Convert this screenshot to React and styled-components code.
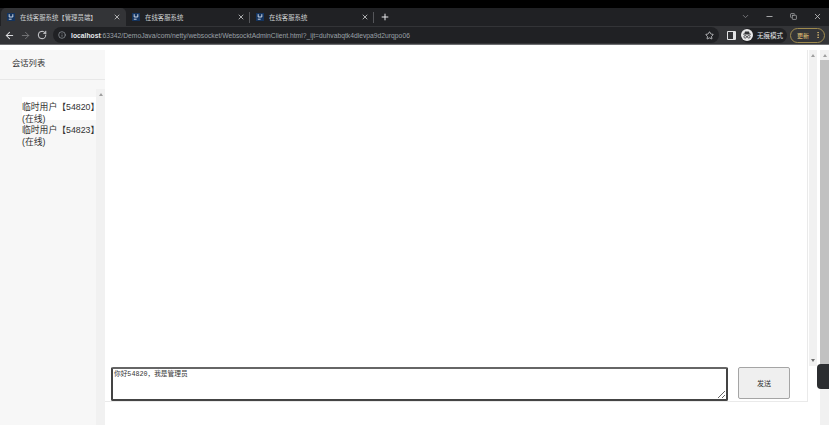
import React from 'react'
import styled, { createGlobalStyle } from 'styled-components'
import { ArrowLeft, ArrowRight, RotateCw, Info, Star, X, Plus, ChevronDown, Minus, Copy, EllipsisVertical } from 'lucide-react'

const Global = createGlobalStyle`
  html, body { margin: 0; padding: 0; height: 100%; overflow: hidden; background: #fff; }
  body { font-family: "Liberation Sans", "Noto Sans CJK SC", sans-serif; }
`

const Page = styled.div`
  width: 829px;
  height: 425px;
  display: flex;
  flex-direction: column;
  overflow: hidden;
`

const TopBlack = styled.div`
  height: 8px;
  background: #000;
`

const TabStrip = styled.div`
  height: 18px;
  background: #202124;
  display: flex;
  align-items: stretch;
  padding-left: 1px;
`

const Tab = styled.div`
  width: ${(p) => p.$w}px;
  padding: 0 ${(p) => (p.$active ? 5 : 4)}px 0 6px;
  box-sizing: border-box;
  display: flex;
  align-items: center;
  gap: 5px;
  background: ${(p) => (p.$active ? '#333437' : 'transparent')};
  border-radius: 5px 5px 0 0;
  color: #cfd0d2;
  font-size: 6.4px;
`

const TabTitle = styled.span`
  flex: 1;
  white-space: nowrap;
`

const TabSep = styled.span`
  width: 1px;
  height: 11px;
  align-self: center;
  background: #55565a;
`

const NewTab = styled.span`
  width: 22px;
  display: flex;
  align-items: center;
  justify-content: center;
  color: #e8e9eb;
`

const WinControls = styled.div`
  margin-left: auto;
  display: flex;
  align-items: center;
  padding-bottom: 2px;
  color: #cfd0d2;
`

const WinButton = styled.span`
  width: 24px;
  display: flex;
  justify-content: center;
`

const Toolbar = styled.div`
  height: 19px;
  box-sizing: border-box;
  background: #333437;
  border-bottom: 1px solid #6c6d70;
  display: flex;
  align-items: center;
  padding-left: 1px;
  color: #d6d7d9;
`

const NavButton = styled.span`
  display: flex;
  width: 16.5px;
  justify-content: center;
  color: ${(p) => (p.$dim ? '#77787b' : '#dcdde0')};
`

const Omnibox = styled.div`
  margin-left: 2.5px;
  width: 666px;
  height: 16px;
  border-radius: 8px;
  background: #202124;
  display: flex;
  align-items: center;
  padding: 0 5px;
  box-sizing: border-box;
  gap: 5px;
  font-size: 6.75px;
  color: #9aa0a6;
  white-space: nowrap;
`

const Url = styled.span`
  flex: 1;
  b { color: #e8eaed; font-weight: 700; }
`

const SidePanelIcon = styled.span`
  margin-left: 7.5px;
  width: 9px;
  height: 9px;
  box-sizing: border-box;
  border: 1px solid #e3e4e6;
  border-right-width: 3px;
  border-radius: 1px;
`

const IncognitoPill = styled.div`
  margin-left: 5.5px;
  height: 15px;
  border-radius: 8px;
  background: #202124;
  display: flex;
  align-items: center;
  gap: 4px;
  padding-right: 4px;
  font-size: 6.5px;
  color: #e3e4e6;
  white-space: nowrap;
`

const UpdateChip = styled.div`
  margin-left: 3px;
  height: 15px;
  width: 35px;
  border: 1px solid #a08b4e;
  border-radius: 8px;
  display: flex;
  align-items: center;
  justify-content: space-between;
  padding: 0 2px 0 6px;
  box-sizing: border-box;
  font-size: 6px;
  color: #e8c779;
  white-space: nowrap;
`

const Viewport = styled.div`
  flex: 1;
  min-height: 0;
  position: relative;
  display: flex;
  padding-top: 5px;
  background: #fff;
`

const Sidebar = styled.aside`
  width: 105px;
  background: #f7f7f7;
  display: flex;
  flex-direction: column;
  flex: none;
`

const SidebarHead = styled.div`
  height: 30px;
  box-sizing: border-box;
  border-bottom: 1px solid #e8e8e8;
  padding: 8px 0 0 12px;
  font-size: 8.3px;
  line-height: 11px;
  color: #333;
`

const SideBody = styled.div`
  flex: 1;
  display: flex;
  padding-top: 9px;
`

const ListWrap = styled.div`
  width: 96px;
  padding: 8px 0 0 22px;
  box-sizing: border-box;
`

const SessionItem = styled.div`
  height: 23.4px;
  padding-top: 5px;
  box-sizing: border-box;
  background: ${(p) => (p.$active ? '#fff' : 'transparent')};
  font-size: 8.8px;
  line-height: 11.5px;
  color: #333;
  white-space: nowrap;
`

const ItemLine = styled.div`
  height: 11.5px;
`

const MiniScroll = styled.div`
  width: ${(p) => p.$w || 8}px;
  background: #f1f1f1;
  display: flex;
  flex-direction: column;
  align-items: center;
`

const Arrow = styled.span`
  margin-top: 4px;
  width: 0;
  height: 0;
  border-left: 2.5px solid transparent;
  border-right: 2.5px solid transparent;
  border-bottom: 3px solid #9f9f9f;
`

const ArrowDown = styled(Arrow)`
  margin-top: auto;
  margin-bottom: 4px;
  border-bottom: 0;
  border-top: 3px solid #6f6f6f;
`

const Thumb = styled.div`
  width: 100%;
  margin-top: 3px;
  height: 308px;
  background: #c1c1c1;
`

const Main = styled.main`
  width: 703px;
  height: 352px;
  box-sizing: border-box;
  border-right: 1px solid #eaeaea;
  border-bottom: 1px solid #eaeaea;
  flex: none;
  display: flex;
  flex-direction: column;
  justify-content: flex-end;
  padding-left: 6px;
`

const Composer = styled.div`
  display: flex;
  align-items: flex-start;
  gap: 10px;
`

const Input = styled.textarea`
  width: 617px;
  height: 34px;
  box-sizing: border-box;
  border: 2px solid #444;
  border-top-color: #666;
  border-radius: 2px;
  padding: 1px;
  margin: 0;
  font-family: "Liberation Mono", "Noto Sans CJK SC", monospace;
  font-size: 6.7px;
  line-height: 8px;
  color: #333;
  outline: none;
`

const SendButton = styled.button`
  width: 52px;
  height: 32px;
  box-sizing: border-box;
  border: 1px solid #a5a5a5;
  border-radius: 2px;
  background: #efefef;
  color: #333;
  font-family: inherit;
  font-size: 7px;
  padding: 0;
`

const InnerScroll = styled(MiniScroll)`
  margin-left: 1px;
  height: 316px;
`

const PageScroll = styled(MiniScroll)`
  margin-left: 3px;
  width: 9px;
`

const SideHandle = styled.div`
  position: absolute;
  right: 0;
  top: 319px;
  width: 12px;
  height: 25px;
  background: #2b2d30;
  border-radius: 4px 0 0 4px;
`

function Favicon() {
  return (
    <svg width="8" height="8" viewBox="0 0 8 8" style={{ flex: 'none' }}>
      <rect width="8" height="8" fill="#14345f" />
      <path d="M2.2 1.2v2.8h3.6V1.2" fill="none" stroke="#dfe6f2" strokeWidth=".9" />
      <path d="M1.8 6.2h2.8" stroke="#dfe6f2" strokeWidth=".9" />
    </svg>
  )
}

function IncognitoAvatar() {
  return (
    <svg width="12" height="12" viewBox="0 0 12 12">
      <circle cx="6" cy="6" r="6" fill="#e9e9ea" />
      <path d="M4 2.6h4l.7 2.2H10v.7H2v-.7h1.3z" fill="#333437" />
      <circle cx="4.2" cy="7.8" r="1.3" fill="none" stroke="#333437" strokeWidth=".8" />
      <circle cx="7.8" cy="7.8" r="1.3" fill="none" stroke="#333437" strokeWidth=".8" />
      <path d="M5.5 7.6h1" stroke="#333437" strokeWidth=".7" />
    </svg>
  )
}

export default function App() {
  const tabs = [
    { title: '在线客服系统【管理员端】', w: 125, active: true },
    { title: '在线客服系统', w: 123 },
    { title: '在线客服系统', w: 123 },
  ]
  return (
    <Page>
      <Global />
      <TopBlack />
      <TabStrip>
        {tabs.map((t, i) => (
          <React.Fragment key={i}>
            <Tab $w={t.w} $active={t.active}>
              <Favicon />
              <TabTitle>{t.title}</TabTitle>
              <X size={8} strokeWidth={2.4} />
            </Tab>
            {i > 0 && <TabSep />}
          </React.Fragment>
        ))}
        <NewTab><Plus size={10} strokeWidth={2.4} /></NewTab>
        <WinControls>
          <WinButton><ChevronDown size={9} color="#8d8e91" /></WinButton>
          <WinButton><Minus size={9} /></WinButton>
          <WinButton><Copy size={7} strokeWidth={2} /></WinButton>
          <WinButton><X size={9} strokeWidth={2} /></WinButton>
        </WinControls>
      </TabStrip>
      <Toolbar>
        <NavButton><ArrowLeft size={11} strokeWidth={2.2} /></NavButton>
        <NavButton $dim><ArrowRight size={11} strokeWidth={2} /></NavButton>
        <NavButton><RotateCw size={10} strokeWidth={2.2} /></NavButton>
        <Omnibox>
          <Info size={8} />
          <Url><b>localhost</b>:63342/DemoJava/com/netty/websocket/WebsocktAdminClient.html?_ijt=duhvabqtk4dlevpa9d2urqpo06</Url>
          <Star size={9} color="#dcdde0" />
        </Omnibox>
        <SidePanelIcon />
        <IncognitoPill>
          <IncognitoAvatar />
          无痕模式
        </IncognitoPill>
        <UpdateChip>
          更新
          <EllipsisVertical size={8} />
        </UpdateChip>
      </Toolbar>
      <Viewport>
        <Sidebar>
          <SidebarHead>会话列表</SidebarHead>
          <SideBody>
            <ListWrap>
              <SessionItem $active><ItemLine>临时用户【54820】</ItemLine><ItemLine>(在线)</ItemLine></SessionItem>
              <SessionItem><ItemLine>临时用户【54823】</ItemLine><ItemLine>(在线)</ItemLine></SessionItem>
            </ListWrap>
            <MiniScroll $w={9}><Arrow /></MiniScroll>
          </SideBody>
        </Sidebar>
        <Main>
          <Composer>
            <Input defaultValue="你好54820，我是管理员" />
            <SendButton>发送</SendButton>
          </Composer>
        </Main>
        <InnerScroll><Arrow /><ArrowDown /></InnerScroll>
        <PageScroll><Arrow /><Thumb /></PageScroll>
        <SideHandle />
      </Viewport>
    </Page>
  )
}
